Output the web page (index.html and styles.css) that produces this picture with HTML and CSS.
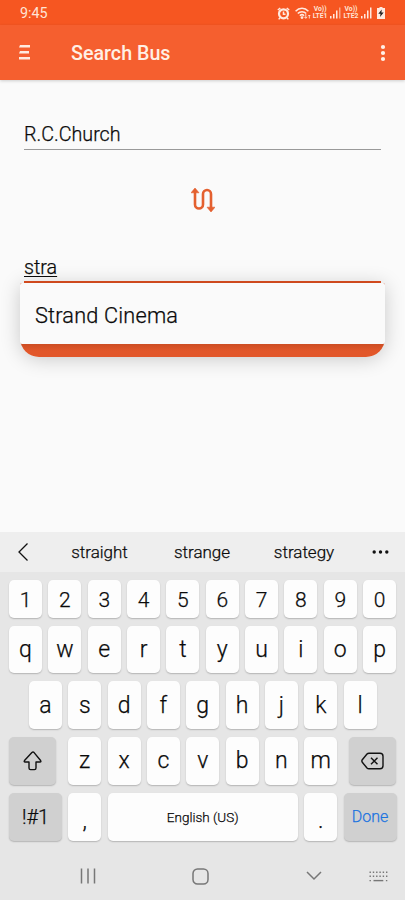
FILE: index.html
```html
<!DOCTYPE html>
<html lang="en">
<head>
<meta charset="utf-8">
<title>Search Bus</title>
<link rel="stylesheet" href="styles.css">
</head>
<body>
<div class="phone">
  <div class="status">
    <span class="clock">9:45</span>
    <svg class="alarm" width="13" height="13" viewBox="0 0 13 13" fill="none" stroke="#ffe9df"><circle cx="6.5" cy="6.8" r="4.5" stroke-width="2.2"/><path d="M6.5 4.5v2.7h2M.8 3l2.5-2M12.2 3l-2.5-2M3 10.800l-1.3 1.6M10 10.800l1.3 1.600" stroke-width="1.5"/></svg>
    <svg class="wifi" width="16" height="13" viewBox="0 0 16 13" fill="none" stroke="#ffe9df" stroke-width="1.5"><path d="M.6 4.2C4.200.3 9.800.3 13.400 4.200M2.800 6.500c2.300-2.500 6.100-2.500 8.400 0M4.900 8.700c1.200-1.200 3-1.200 4.200 0"/><circle cx="7" cy="10.600" r=".7" fill="#ffe9df"/><path d="M10.800 7v4M9.300 9.800l1.500 1.600 1.500-1.600M14.300 11.500V8M13.300 9l1-1 1 1" stroke-width=".9"/></svg>
    <span class="lte"><span>Vo))</span><span>LTE1</span></span>
    <svg class="signal" width="11" height="12" viewBox="0 0 11 12" fill="#ffe9df"><path d="M0 9h1.500v2.500H0zM3 7h1.500v4.500H3zM6 3.500h1.500v8H6z"/><path d="M9 .5h1.500v11H9z" opacity=".55"/></svg>
    <span class="lte second"><span>Vo))</span><span>LTE2</span></span>
    <svg class="signal" width="11" height="12" viewBox="0 0 11 12" fill="#ffe9df"><path d="M0 9h1.500v2.500H0zM3 7h1.500v4.500H3zM6 3.500h1.500v8H6zM9 .5h1.500v11H9z"/></svg>
    <svg class="battery" width="8" height="12" viewBox="0 0 8 12"><path d="M2.500 0h3v1H8v11H0V1h2.500z" fill="#ffe9df"/><path d="M4.800 2.500L1.300 6.800h2.200L3 10l3.700-4.500H4.400z" fill="#222"/></svg>
  </div>
  <header class="bar">
    <svg class="menu" width="11" height="15" viewBox="0 0 11 15" fill="#ffebdf"><path d="M1 0h10v2.500H0zM1 6h9v2.500H0zM0 12h11v2.500H0z"/></svg>
    <h1>Search Bus</h1>
    <svg class="more" width="6" height="18" viewBox="0 0 6 18" fill="#fff1e8"><circle cx="3" cy="3" r="2.100"/><circle cx="3" cy="9" r="2.100"/><circle cx="3" cy="15" r="2.100"/></svg>
  </header>
  <main>
    <div class="field">R.C.Church</div>
    <svg class="swap" width="24" height="24" viewBox="0 0 24 24"><path d="M4 4v12.500a4 4 0 0 0 8 0V6a4 4 0 0 1 8 0v14" fill="none" stroke="#e4602f" stroke-width="2.600"/><path d="M4 0l4 4.800H0zM20 24l-4-4.800h8z" fill="#e4602f" stroke="#e4602f" stroke-width=".6" stroke-linejoin="round"/></svg>
    <div class="field active"><span>stra</span></div>
    <div class="results">
      <div class="option">Strand Cinema</div>
    </div>
  </main>
  <section class="keyboard">
    <div class="suggest">
      <svg width="10" height="18" viewBox="0 0 10 18" fill="none" stroke="#111" stroke-width="1.300"><path d="M9.500.5L1 9l8.500 8.500"/></svg>
      <span>straight</span><span>strange</span><span>strategy</span>
      <svg width="17" height="4" viewBox="0 0 17 4" fill="#111"><circle cx="2.200" cy="2" r="1.700"/><circle cx="8.500" cy="2" r="1.700"/><circle cx="14.800" cy="2" r="1.700"/></svg>
    </div>
    <div class="keys">
      <div class="row numbers"><b>1</b><b>2</b><b>3</b><b>4</b><b>5</b><b>6</b><b>7</b><b>8</b><b>9</b><b>0</b></div>
      <div class="row"><b>q</b><b>w</b><b>e</b><b>r</b><b>t</b><b>y</b><b>u</b><b>i</b><b>o</b><b>p</b></div>
      <div class="row center"><b>a</b><b>s</b><b>d</b><b>f</b><b>g</b><b>h</b><b>j</b><b>k</b><b>l</b></div>
      <div class="row spread">
        <b class="fn"><svg width="20" height="20" viewBox="0 0 20 20" fill="none" stroke="#111" stroke-width="1.400" stroke-linejoin="round"><path d="M8.900 1.600L1.500 9.500q-.8 1.500 .6 1.500H6v6q0 1.600 1.600 1.600h3.800q1.600 0 1.600-1.600v-6h4q1.400 0 .6-1.500L11.100 1.600q-1.100-1-2.200 0z"/></svg></b>
        <div class="letters"><b>z</b><b>x</b><b>c</b><b>v</b><b>b</b><b>n</b><b>m</b></div>
        <b class="fn"><svg width="23" height="18" viewBox="0 0 23 18" fill="none" stroke="#111" stroke-width="1.400" stroke-linejoin="round"><path d="M8 1.200h11q3 0 3 3v9.600q0 3-3 3H8q-1.300 0-2-.8L1.300 10.300q-.9-1.300 0-2.600L6 2q.7-.8 2-.8z"/><path d="M10 5.700l6.500 6.600M16.500 5.700L10 12.300"/></svg></b>
      </div>
      <div class="row">
        <b class="fn wide">!#1</b><b class="dot">,</b><b class="space">English (US)</b><b class="dot">.</b><b class="fn wide done">Done</b>
      </div>
    </div>
    <nav>
      <svg width="16" height="16" viewBox="0 0 16 16" stroke="#777" stroke-width="1.500"><path d="M1.500 .5v15M8 .5v15M14.500 .5v15"/></svg>
      <svg width="17" height="17" viewBox="0 0 17 17" fill="none" stroke="#777" stroke-width="1.500"><rect x="1" y="1" width="15" height="15" rx="4.500"/></svg>
      <svg width="16" height="10" viewBox="0 0 16 10" fill="none" stroke="#777" stroke-width="1.500"><path d="M1 1l7 7 7-7"/></svg>
      <svg width="19" height="11" viewBox="0 0 19 11" fill="none" stroke="#777" stroke-width="1.400"><path d="M.5 1.200H19M.5 5.300H19M.5 9.600H1.900M16.900 9.600H18.300" stroke-dasharray="1.400 1.900"/><path d="M4.500 9.600h9.800"/></svg>
    </nav>
  </section>
</div>
</body>
</html>
```
FILE: styles.css
```css
* { box-sizing: border-box; }
body { margin: 0; font-family: Roboto, sans-serif; color: #0a0a0a; }
svg { display: block; flex: none; }
.phone { width: 405px; height: 900px; display: flex; flex-direction: column; background: #fafafa; overflow: hidden; }
.status { height: 25px; flex: none; display: flex; align-items: center; padding: 1px 20px 0; background: #f65621; color: #ffe4d5; }
.clock { font-size: 14.3px; width: 258px; }
.wifi { margin-left: 5px; }
.lte { display: flex; flex-direction: column; align-items: center; width: 16px; margin-left: 1px; font-size: 6.8px; line-height: 7px; font-weight: 700; white-space: nowrap; }
.lte span { display: block; height: 7px; }
.signal { margin-left: 2px; }
.second { margin-left: 2px; }
.battery { margin-left: 5px; }
.bar { height: 55px; flex: none; display: flex; align-items: center; padding: 0 19px; background: #f55f2f; box-shadow: 0 1px 3px rgba(0,0,0,.18); color: #fff0e5; }
h1 { margin: 2px 0 0 41px; flex: 1; font-size: 19.7px; line-height: 24px; font-weight: 500; }
main { height: 452px; flex: none; padding: 40px 20px 0; display: flex; flex-direction: column; align-items: center; }
.field { width: 357px; height: 30px; font-size: 19.7px; line-height: 29px; border-bottom: 1px solid #999; flex: none; }
.field, .option, .suggest span, b { font-weight: 300; -webkit-text-stroke: .25px currentColor; }
.swap { margin: 38px 0 41px; }
.active { height: 30px; line-height: 29px; border-bottom: 2px solid #df4f20; }
.active span { text-decoration: underline; text-decoration-thickness: 1px; text-underline-offset: 2px; }
.results { width: 365px; height: 74px; border-radius: 2px 2px 19px 19px; background: linear-gradient(#c94b22 60px, #e2572a 68px); box-shadow: 0 2px 20px rgba(0,0,0,.2); }
.option { height: 61px; padding-left: 15px; border-radius: 2px; background: #fafafa; font-size: 21.700px; line-height: 66px; letter-spacing: .2px; }
.keyboard { flex: 1; display: flex; flex-direction: column; background: #e6e6e6; }
.suggest { height: 40px; flex: none; display: grid; grid-template-columns: 30px 103px 102px 102px 50px; padding-left: 18px; align-items: center; background: #eee; font-size: 17px; text-align: center; }
.suggest svg:last-child { justify-self: center; }
.keys { display: flex; flex-direction: column; gap: 8px; padding: 8px 8.5px 0 9px; }
.row, .letters { display: flex; gap: 6.3px; height: 47.800px; }
.numbers { height: 37.500px; }
b { width: 33.050px; flex: none; display: flex; align-items: center; justify-content: center; border-radius: 5px; background: #fdfdfd; box-shadow: 0 1px 1.500px rgba(0,0,0,.22); font-size: 23px; }
.numbers b { font-size: 21px; padding-top: 2px; }
.center { justify-content: center; }
.spread { justify-content: space-between; }
.fn { width: 47px; background: #d0d0d0; }
.wide { width: 53px; font-size: 20px; }
.dot { padding-top: 7px; }
.space { flex: 1; font-size: 13.500px; }
.done { font-size: 16px; color: #1a73e0; }
nav { flex: 1; display: grid; grid-template-columns: 113px 113px 114px 14px; align-items: center; justify-items: center; padding: 12px 0 0 31px; }
```
